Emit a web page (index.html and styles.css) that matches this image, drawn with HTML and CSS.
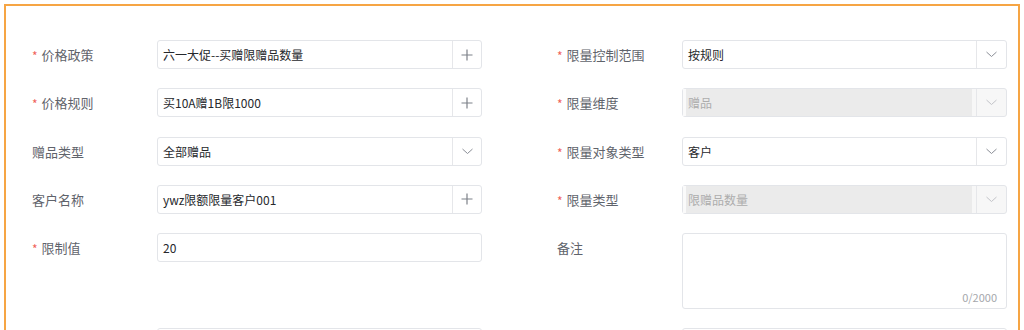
FILE: index.html
```html
<!DOCTYPE html>
<html lang="zh-CN">
<head>
    <meta charset="utf-8" />
    <title>限量设置</title>
    <link rel="stylesheet" href="styles.css">
</head>
<body>

    <div class="frame">
        <div class="form">

            <!-- row 1 -->
            <div class="item">
                <label class="label required">价格政策</label>
                <div class="field">
                    <span class="value">六一大促--买赠限赠品数量</span>
                    <span class="addon"><svg width="12" height="12" viewBox="0 0 12 12"><path d="M6 0.5V11.5M0.5 6H11.5" stroke="#7d8189" stroke-width="1.2" fill="none"/></svg></span>
                </div>
            </div>
            <div class="item">
                <label class="label required">限量控制范围</label>
                <div class="field">
                    <span class="value">按规则</span>
                    <span class="addon wide"><svg width="11" height="7" viewBox="0 0 11 7"><path d="M0.5 1L5.5 5.5L10.5 1" stroke="#8a8e96" stroke-width="1" fill="none"/></svg></span>
                </div>
            </div>

            <!-- row 2 -->
            <div class="item">
                <label class="label required">价格规则</label>
                <div class="field">
                    <span class="value">买10A赠1B限1000</span>
                    <span class="addon"><svg width="12" height="12" viewBox="0 0 12 12"><path d="M6 0.5V11.5M0.5 6H11.5" stroke="#7d8189" stroke-width="1.2" fill="none"/></svg></span>
                </div>
            </div>
            <div class="item">
                <label class="label required">限量维度</label>
                <div class="field disabled">
                    <span class="value">赠品</span>
                    <span class="addon wide"><svg width="11" height="7" viewBox="0 0 11 7"><path d="M0.5 1L5.5 5.5L10.5 1" stroke="#c2c4c8" stroke-width="1" fill="none"/></svg></span>
                </div>
            </div>

            <!-- row 3 -->
            <div class="item">
                <label class="label">赠品类型</label>
                <div class="field">
                    <span class="value">全部赠品</span>
                    <span class="addon"><svg width="11" height="7" viewBox="0 0 11 7"><path d="M0.5 1L5.5 5.5L10.5 1" stroke="#8a8e96" stroke-width="1" fill="none"/></svg></span>
                </div>
            </div>
            <div class="item">
                <label class="label required">限量对象类型</label>
                <div class="field">
                    <span class="value">客户</span>
                    <span class="addon wide"><svg width="11" height="7" viewBox="0 0 11 7"><path d="M0.5 1L5.5 5.5L10.5 1" stroke="#8a8e96" stroke-width="1" fill="none"/></svg></span>
                </div>
            </div>

            <!-- row 4 -->
            <div class="item">
                <label class="label">客户名称</label>
                <div class="field">
                    <span class="value">ywz限额限量客户001</span>
                    <span class="addon"><svg width="12" height="12" viewBox="0 0 12 12"><path d="M6 0.5V11.5M0.5 6H11.5" stroke="#7d8189" stroke-width="1.2" fill="none"/></svg></span>
                </div>
            </div>
            <div class="item">
                <label class="label required">限量类型</label>
                <div class="field disabled">
                    <span class="value">限赠品数量</span>
                    <span class="addon wide"><svg width="11" height="7" viewBox="0 0 11 7"><path d="M0.5 1L5.5 5.5L10.5 1" stroke="#c2c4c8" stroke-width="1" fill="none"/></svg></span>
                </div>
            </div>

            <!-- row 5 -->
            <div class="item">
                <label class="label required">限制值</label>
                <div class="field">
                    <span class="value">20</span>
                </div>
            </div>
            <div class="item">
                <label class="label">备注</label>
                <div class="textarea">
                    <span class="count">0/2000</span>
                </div>
            </div>

            <!-- row 6 (cut off) -->
            <div class="item">
                <label class="label"></label>
                <div class="field"></div>
            </div>
            <div class="item">
                <label class="label"></label>
                <div class="field"></div>
            </div>

        </div>
    </div>

</body>
</html>
```

FILE: styles.css
```css
html, body {
    margin: 0;
    padding: 0;
    height: 330px;
    overflow: hidden;
    background: #fff;
    font-family: "Noto Sans CJK SC", "Noto Sans", sans-serif;
}

/* orange outline round the form */
.frame {
    margin: 4px 4px 0 4px;
    border: 2px solid #f6a544;
    border-bottom: none;
    padding: 34px 11px 40px 26px;
}

.form {
    display: grid;
    grid-template-columns: 450px 450px;
    column-gap: 75px;
    row-gap: 19.3px;
    align-items: start;
}

.item {
    display: flex;
    align-items: flex-start;
}

.label {
    width: 125px;
    flex: none;
    height: 29px;
    line-height: 29px;
    font-size: 13px;
    color: #5f636b;
}

.label.required::before {
    content: "*";
    color: #f0625a;
    font-size: 12px;
    margin-right: 4px;
    position: relative;
    top: 1px;
}

.field {
    flex: 1;
    height: 29px;
    box-sizing: border-box;
    border: 1px solid #e3e5e9;
    border-radius: 3px;
    background: #fff;
    display: flex;
    align-items: stretch;
}

.value {
    flex: 1;
    padding-left: 5px;
    line-height: 27px;
    font-size: 12px;
    color: #26282c;
    white-space: nowrap;
}

.addon {
    width: 28px;
    flex: none;
    border-left: 1px solid #e6e7ea;
    display: flex;
    align-items: center;
    justify-content: center;
}

.addon.wide {
    width: 29px;
}

/* read-only selects */
.field.disabled {
    background: #f7f7f7;
}

.field.disabled .value {
    background: #ebebeb;
    border-left: 3px solid #fafafa;
    padding-left: 2px;
    margin-right: 4px;
    color: #adadad;
}

.textarea {
    flex: 1;
    height: 76px;
    box-sizing: border-box;
    border: 1px solid #e3e5e9;
    border-radius: 3px;
    position: relative;
}

.count {
    position: absolute;
    right: 9px;
    bottom: 3px;
    font-size: 11px;
    color: #a5a7ab;
}
```
